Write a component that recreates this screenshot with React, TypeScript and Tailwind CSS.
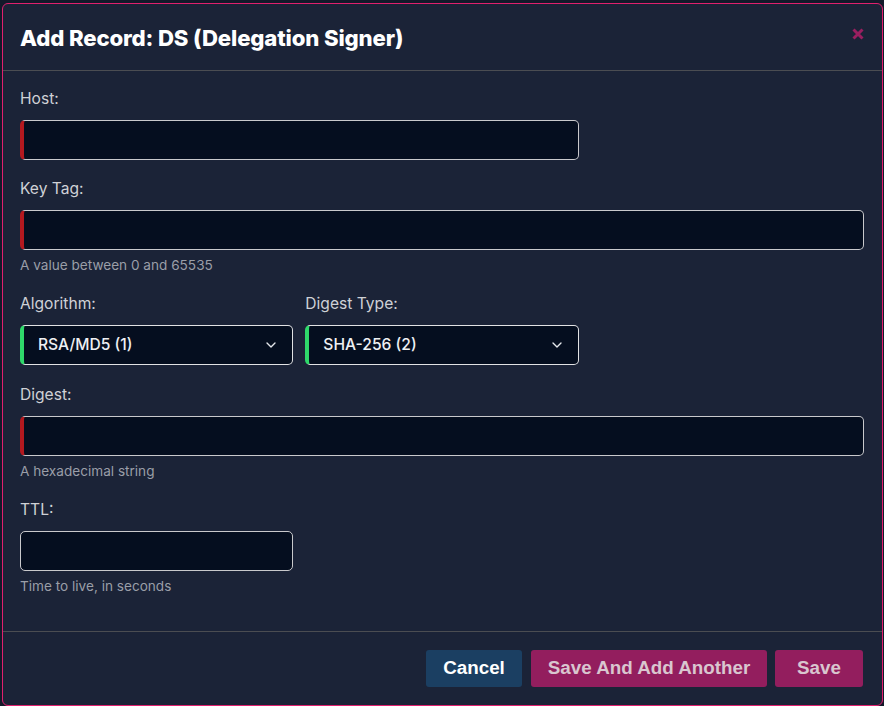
import { ChevronDown } from "lucide-react";

const inter = "font-['Inter','Noto_Sans',sans-serif]";

const Label = ({ children }: { children: React.ReactNode }) => (
  <label className="block text-[15.6px] leading-[20px] text-[#cfd1d6] mb-[11px]">{children}</label>
);

const Help = ({ children }: { children: React.ReactNode }) => (
  <p className="mt-[5px] text-[13.6px] leading-[20px] text-[#9a9ea8]">{children}</p>
);

const TextInput = ({ stripe }: { stripe?: boolean }) => (
  <div
    className={
      "h-[40px] w-full rounded-[5px] border border-[#c9c9cc] bg-[#050e1f] " +
      (stripe ? "border-l-[4px] border-l-[#b3191f]" : "")
    }
  />
);

const Select = ({ value }: { value: string }) => (
  <div className="h-[40px] w-full rounded-[5px] border border-[#e2e2e4] border-l-[4px] border-l-[#2fd86a] bg-[#050e1f] flex items-center justify-between pl-[14px] pr-[13px]">
    <span className="text-[15.6px] font-medium text-[#eef0f3]">{value}</span>
    <ChevronDown className="h-[16px] w-[16px] text-[#e6e8ec]" strokeWidth={2} />
  </div>
);

export default function App() {
  return (
    <div className={"w-[884px] h-[706px] bg-[#131a2a] pt-[3px] pl-[2px] overflow-hidden " + inter}>
      <div className="w-[881px] h-[703px] bg-[#1b2337] border border-[#e0206e] rounded-[6px] flex flex-col">
        {/* Header */}
        <div className="h-[67px] flex items-center justify-between pl-[17px] pr-[18px] border-b border-[#4b4d52] shrink-0">
          <h2 className="text-[22.2px] font-extrabold text-white tracking-[-0.15px] mt-[2px]">Add Record: DS (Delegation Signer)</h2>
          <svg width="12" height="12" viewBox="0 0 12 12" className="mb-[7px]">
            <path d="M1.5 1.5 L10.5 10.5 M10.5 1.5 L1.5 10.5" stroke="#9a1f60" strokeWidth="3" />
          </svg>
        </div>

        {/* Body */}
        <div className="flex-1 pt-[18px] pl-[17px] pr-[18px]">
          <div className="grid grid-cols-3 gap-x-[12px]">
            <div className="col-span-2">
              <Label>Host:</Label>
              <TextInput stripe />
            </div>
            <div />

            <div className="col-span-3 mt-[19px]">
              <Label>Key Tag:</Label>
              <TextInput stripe />
              <Help>A value between 0 and 65535</Help>
            </div>

            <div className="mt-[19px]">
              <Label>Algorithm:</Label>
              <Select value="RSA/MD5 (1)" />
            </div>
            <div className="mt-[19px]">
              <Label>Digest Type:</Label>
              <Select value="SHA-256 (2)" />
            </div>
            <div />

            <div className="col-span-3 mt-[20px]">
              <Label>Digest:</Label>
              <TextInput stripe />
              <Help>A hexadecimal string</Help>
            </div>

            <div className="mt-[19px]">
              <Label>TTL:</Label>
              <TextInput />
              <Help>Time to live, in seconds</Help>
            </div>
          </div>
        </div>

        {/* Footer */}
        <div className="h-[74px] border-t border-[#4b4d52] flex items-center justify-end pr-[19px] shrink-0 font-['Liberation_Sans',Arial,sans-serif]">
          <button className="h-[37px] w-[96px] rounded-[3px] bg-[#1b3f62] text-[18.8px] font-bold text-white">Cancel</button>
          <button className="ml-[9px] h-[37px] w-[236px] rounded-[3px] bg-[#931e5e] text-[18.8px] font-bold text-[#d9c6cf]">Save And Add Another</button>
          <button className="ml-[8px] h-[37px] w-[88px] rounded-[3px] bg-[#931e5e] text-[18.8px] font-bold text-[#d9c6cf]">Save</button>
        </div>
      </div>
    </div>
  );
}
